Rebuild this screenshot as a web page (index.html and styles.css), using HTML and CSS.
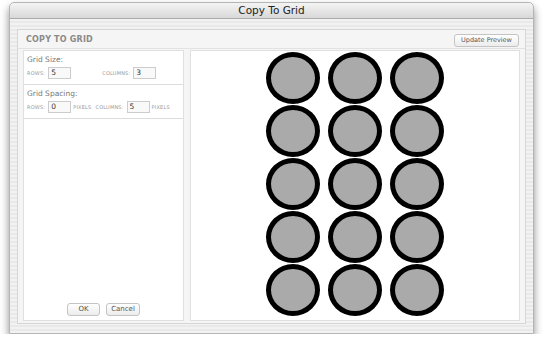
FILE: index.html
```html
<!doctype html>
<html lang="en">
<head>
    <meta charset="utf-8">
    <title>Copy To Grid</title>
    <link rel="stylesheet" href="styles.css">
</head>
<body>
    <div class="window">
        <div class="titlebar">Copy To Grid</div>
        <div class="window-body">
            <div class="panel">
                <div class="panel-header">
                    <h1 class="panel-title">COPY TO GRID</h1>
                    <button class="btn btn-preview">Update Preview</button>
                </div>
                <div class="panel-content">
                    <div class="options">
                        <div class="group">
                            <div class="group-label">Grid Size:</div>
                            <div class="field-row">
                                <span class="cap">ROWS:</span>
                                <span class="num">5</span>
                                <span class="cap cap-cols">COLUMNS:</span>
                                <span class="num">3</span>
                            </div>
                        </div>
                        <div class="group">
                            <div class="group-label">Grid Spacing:</div>
                            <div class="field-row">
                                <span class="cap">ROWS:</span>
                                <span class="num">0</span>
                                <span class="cap">PIXELS</span>
                                <span class="cap cap-cols2">COLUMNS:</span>
                                <span class="num">5</span>
                                <span class="cap">PIXELS</span>
                            </div>
                        </div>
                        <div class="actions">
                            <button class="btn btn-ok">OK</button>
                            <button class="btn">Cancel</button>
                        </div>
                    </div>
                    <div class="preview">
                        <div class="grid">
                            <div class="dot"></div><div class="dot"></div><div class="dot"></div>
                            <div class="dot"></div><div class="dot"></div><div class="dot"></div>
                            <div class="dot"></div><div class="dot"></div><div class="dot"></div>
                            <div class="dot"></div><div class="dot"></div><div class="dot"></div>
                            <div class="dot"></div><div class="dot"></div><div class="dot"></div>
                        </div>
                    </div>
                </div>
            </div>
        </div>
    </div>
</body>
</html>
```

FILE: styles.css
```css
html {
    background: #fff;
}

body {
    margin: 0;
    padding: 2px 9px 0;
    font-family: "DejaVu Sans", Verdana, sans-serif;
    color: #555;
}

.window {
    width: 525px;
    height: 332px;
    display: flex;
    flex-direction: column;
    border-radius: 5px 5px 0 0;
    border: 1px solid #b5b5b5;
    box-sizing: border-box;
    box-shadow: 0 5px 8px rgba(0, 0, 0, .45);
    background: repeating-linear-gradient(#f2f2f2 0, #f2f2f2 2px, #e9e9e9 2px, #e9e9e9 4px);
}

.titlebar {
    height: 15px;
    line-height: 15px;
    text-align: center;
    font-size: 10.5px;
    color: #222;
    border-bottom: 1px solid #aaa;
    border-radius: 5px 5px 0 0;
    background: linear-gradient(#f4f4f4, #d8d8d8);
}

.window-body {
    flex: 1;
    display: flex;
    padding: 10px 7px 9px 7px;
}

.panel {
    flex: 1;
    display: flex;
    flex-direction: column;
    background: #f5f5f5;
    border: 1px solid #d6d6d6;
}

.panel-header {
    height: 18px;
    display: flex;
    align-items: center;
    justify-content: space-between;
    padding: 0 6px 0 8px;
    border-bottom: 1px solid #e2e2e2;
}

.panel-title {
    margin: 0;
    font-size: 8px;
    font-weight: bold;
    letter-spacing: .2px;
    color: #8a8a8a;
}

.btn {
    font-family: "DejaVu Sans", Verdana, sans-serif;
    font-size: 7px;
    color: #555;
    background: linear-gradient(#fff, #ececec);
    border: 1px solid #c4c4c4;
    border-radius: 3px;
    height: 13px;
    padding: 0 4px;
    line-height: 11px;
    white-space: nowrap;
}

.btn-preview {
    width: 65px;
    padding: 0;
    font-size: 6.5px;
    margin-top: 2px;
}

.panel-content {
    flex: 1;
    display: flex;
    gap: 6px;
    padding: 1px 5px 2px 5px;
}

.options {
    width: 161px;
    display: flex;
    flex-direction: column;
    background: #fff;
    border: 1px solid #e0e0e0;
    box-sizing: border-box;
}

.group {
    padding: 3px 3px 5px;
    border-bottom: 1px solid #dcdcdc;
}

.group-label {
    font-size: 7.5px;
    color: #777;
    height: 11px;
    line-height: 11px;
}

.field-row {
    display: flex;
    align-items: center;
    margin-top: 2px;
    height: 12px;
}

.cap {
    font-size: 5px;
    color: #999;
    letter-spacing: .2px;
}

.num {
    width: 19px;
    height: 10px;
    line-height: 10px;
    border: 1px solid #ccc;
    background: #f9f9f9;
    font-size: 7.5px;
    color: #333;
    padding-left: 2px;
    margin: 0 2px 0 3px;
    box-sizing: content-box;
}

.cap-cols {
    margin-left: 29px;
}

.cap-cols2 {
    margin-left: 4px;
}

.actions {
    margin-top: auto;
    display: flex;
    justify-content: center;
    gap: 6px;
    padding-bottom: 4px;
}

.btn-ok {
    width: 32px;
}

.actions .btn {
    min-width: 33px;
}

.preview {
    flex: 1;
    display: flex;
    justify-content: center;
    background: #fff;
    border: 1px solid #e0e0e0;
    overflow: hidden;
}

.grid {
    display: grid;
    grid-template-columns: repeat(3, 54px);
    grid-auto-rows: 52px;
    column-gap: 8px;
    row-gap: 1px;
    padding-top: 1px;
}

.dot {
    box-sizing: border-box;
    border: 5px solid #000;
    border-radius: 50%;
    background: #aaa;
}
```
